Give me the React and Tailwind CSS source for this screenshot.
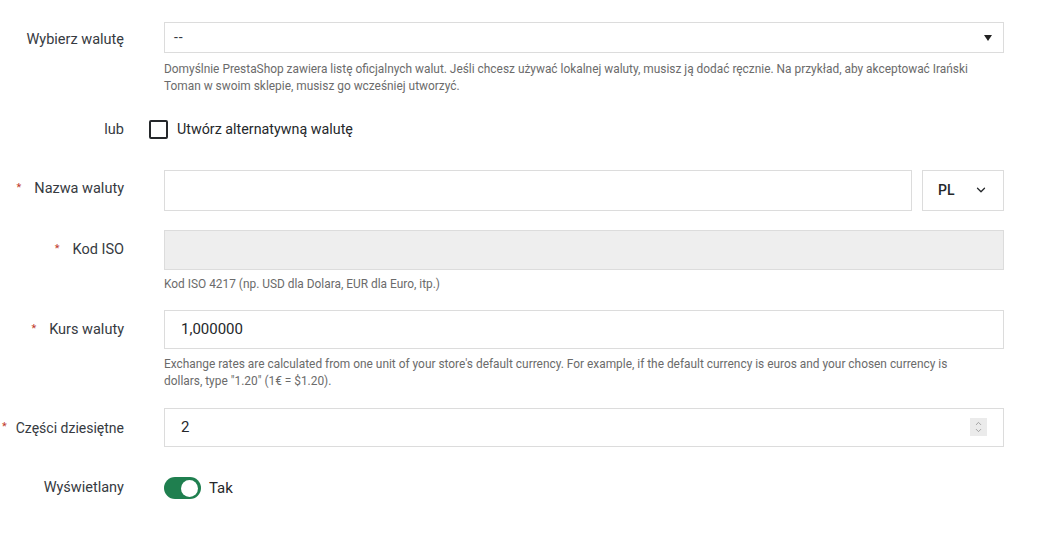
import { ChevronDown, ChevronUp } from 'lucide-react';

const font = { fontFamily: 'Roboto, "Noto Sans", Arial, sans-serif' };

function Label({ children, required, tight }) {
  return (
    <div
      className={
        'w-[124px] shrink-0 flex justify-end items-start whitespace-nowrap leading-5 text-[#363a41] ' +
        (tight ? 'text-[14px]' : 'text-[14.5px]')
      }
    >
      {required && (
        <span className={'text-[#c0392b] text-[11px] mt-[-1px] ' + (tight ? 'mr-[9px]' : 'mr-[13px]')}>*</span>
      )}
      <span>{children}</span>
    </div>
  );
}

function Help({ children, className = '' }) {
  return <p className={'text-[11.9px] leading-[17px] text-[#6b6b6b] ' + className}>{children}</p>;
}

export default function App() {
  return (
    <div className="w-[1062px] h-[536px] bg-white overflow-hidden" style={font}>
      <div className="pt-[22px] pr-[58px] flex flex-col">
        {/* Wybierz walute */}
        <div className="flex gap-[40px]">
          <div className="pt-[8px]">
            <Label>Wybierz walutę</Label>
          </div>
          <div className="flex-1">
            <div className="h-[31px] border border-[#dcdcdc] flex items-center justify-between pl-[9px] pr-[11px] text-[14px] text-[#363a41]">
              <span className="tracking-[1px]">--</span>
              <span className="w-0 h-0 border-l-[4px] border-r-[4px] border-t-[6px] border-l-transparent border-r-transparent border-t-[#222]" />
            </div>
            <Help className="mt-[8px]">
              Domyślnie PrestaShop zawiera listę oficjalnych walut. Jeśli chcesz używać lokalnej waluty, musisz ją dodać ręcznie. Na przykład, aby akceptować Irański
              <br />
              Toman w swoim sklepie, musisz go wcześniej utworzyć.
            </Help>
          </div>
        </div>

        {/* lub */}
        <div className="flex gap-[25px] items-center mt-[24px]">
          <div className="w-[124px] flex justify-end text-[14.5px] text-[#363a41]">lub</div>
          <label className="flex items-center gap-[9px] text-[14.3px] text-[#25282b]">
            <span className="w-[19px] h-[19px] border-2 border-[#25282b] rounded-[2px]" />
            Utwórz alternatywną walutę
          </label>
        </div>

        {/* Nazwa waluty */}
        <div className="flex gap-[40px] mt-[29px]">
          <div className="pt-[9px]">
            <Label required>Nazwa waluty</Label>
          </div>
          <div className="flex-1 flex gap-[10px]">
            <div className="flex-1 h-[41px] border border-[#dcdcdc]" />
            <div className="w-[82px] h-[41px] border border-[#dcdcdc] flex items-center pl-[15px] pr-[15px] justify-between text-[14px] font-medium text-[#25282b]">
              <span>PL</span>
              <ChevronDown size={14} strokeWidth={2.2} className="text-[#25282b]" />
            </div>
          </div>
        </div>

        {/* Kod ISO */}
        <div className="flex gap-[40px] mt-[19px]">
          <div className="pt-[10px]">
            <Label required>Kod ISO</Label>
          </div>
          <div className="flex-1">
            <div className="h-[40px] border border-[#dcdcdc] bg-[#eeeeee]" />
            <Help className="mt-[6px]">Kod ISO 4217 (np. USD dla Dolara, EUR dla Euro, itp.)</Help>
          </div>
        </div>

        {/* Kurs waluty */}
        <div className="flex gap-[40px] mt-[17px]">
          <div className="pt-[10px]">
            <Label required>Kurs waluty</Label>
          </div>
          <div className="flex-1">
            <div className="h-[39px] border border-[#dcdcdc] flex items-center pl-[16px] text-[15px] text-[#25282b]">
              1,000000
            </div>
            <Help className="mt-[7px]">
              Exchange rates are calculated from one unit of your store's default currency. For example, if the default currency is euros and your chosen currency is
              <br />
              dollars, type "1.20" (1€ = $1.20).
            </Help>
          </div>
        </div>

        {/* Czesci dziesietne */}
        <div className="flex gap-[40px] mt-[18px]">
          <div className="pt-[10px]">
            <Label required tight>Części dziesiętne</Label>
          </div>
          <div className="flex-1">
            <div className="h-[39px] border border-[#dcdcdc] flex items-center justify-between pl-[16px] pr-[16px] text-[15px] text-[#25282b]">
              <span>2</span>
              <span className="w-[17px] h-[18px] bg-[#ebebeb] flex flex-col items-center justify-center text-[#8a8a8a]">
                <ChevronUp size={9} strokeWidth={2} />
                <ChevronDown size={9} strokeWidth={2} className="-mt-[2px]" />
              </span>
            </div>
          </div>
        </div>

        {/* Wyswietlany */}
        <div className="flex gap-[40px] mt-[30px] items-center">
          <Label>Wyświetlany</Label>
          <div className="flex items-center gap-[8px]">
            <span className="w-[37px] h-[22px] rounded-full bg-[#1f7f4f] flex items-center justify-end pr-[3px]">
              <span className="w-[17px] h-[17px] rounded-full bg-white" />
            </span>
            <span className="text-[15px] text-[#25282b]">Tak</span>
          </div>
        </div>
      </div>
    </div>
  );
}
